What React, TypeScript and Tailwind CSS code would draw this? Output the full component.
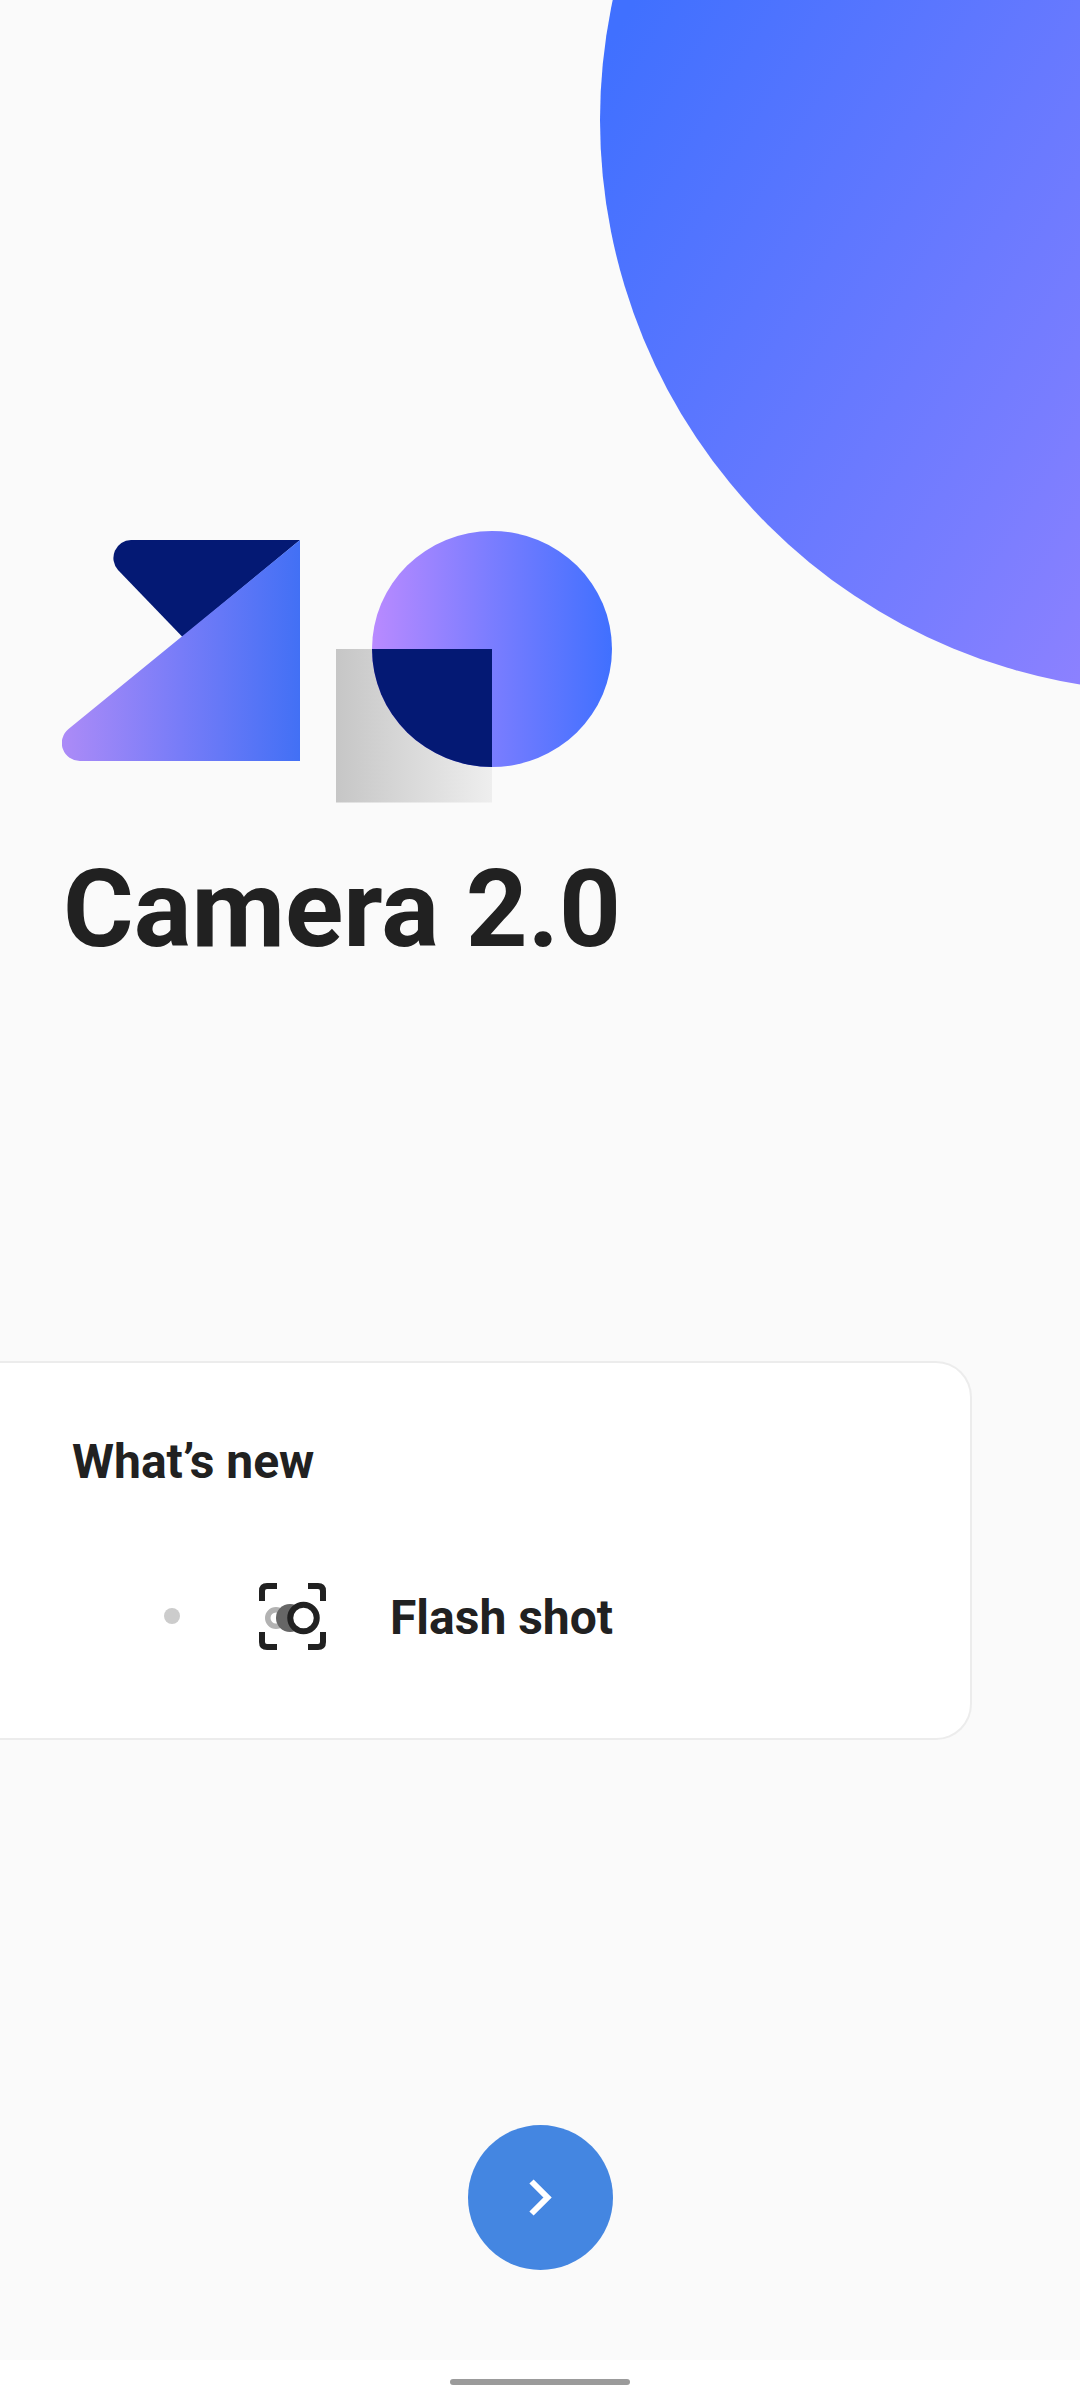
function HeroCircle() {
  return (
    <svg className="absolute top-0 right-0 h-[692px] w-[480px]" viewBox="600 0 480 692" aria-hidden="true">
      <defs>
        <linearGradient id="hero" gradientUnits="userSpaceOnUse" x1="605" y1="50" x2="1570" y2="620">
          <stop offset="0" stopColor="#4070ff" />
          <stop offset="0.5" stopColor="#787dff" />
          <stop offset="1" stopColor="#b98aff" />
        </linearGradient>
      </defs>
      <circle cx="1172" cy="120" r="572" fill="url(#hero)" />
    </svg>
  );
}

function Logo() {
  return (
    <svg className="h-[272px] w-[550px]" viewBox="62 531 550 272" role="img" aria-label="Camera logo">
      <defs>
        <linearGradient id="wedge" x1="0" y1="0" x2="1" y2="0">
          <stop offset="0" stopColor="#ac8bf7" />
          <stop offset="0.5" stopColor="#777cf8" />
          <stop offset="1" stopColor="#4270f5" />
        </linearGradient>
        <linearGradient id="disc" x1="0" y1="0" x2="1" y2="0">
          <stop offset="0" stopColor="#b98aff" />
          <stop offset="0.5" stopColor="#7a7dff" />
          <stop offset="1" stopColor="#4070ff" />
        </linearGradient>
        <linearGradient id="tile" x1="0" y1="0" x2="1" y2="0">
          <stop offset="0" stopColor="#c6c6c6" />
          <stop offset="1" stopColor="#eeeeee" />
        </linearGradient>
        <clipPath id="disc-clip">
          <ellipse cx="492" cy="649" rx="120" ry="118" />
        </clipPath>
      </defs>
      <path d="M300 540H131A18 18 0 0 0 118 570L182.500 637Z" fill="#041974" />
      <path d="M300 540V761H80A18 18 0 0 1 68.500 729Z" fill="url(#wedge)" />
      <rect x="336" y="649" width="156" height="153.500" fill="url(#tile)" />
      <ellipse cx="492" cy="649" rx="120" ry="118" fill="url(#disc)" />
      <rect x="336" y="649" width="156" height="153" fill="#041974" clipPath="url(#disc-clip)" />
    </svg>
  );
}

function FlashShotIcon() {
  return (
    <svg className="size-[67px]" viewBox="0 0 67 67" fill="none" aria-hidden="true">
      <circle cx="17" cy="35" r="8.250" stroke="#b2b2b2" strokeWidth="5.500" />
      <circle cx="31" cy="35" r="14" fill="#666666" />
      <circle cx="44.500" cy="35" r="13.250" fill="#ffffff" stroke="#212121" strokeWidth="6" />
      <path
        d="M3 18V8Q3 3 8 3H18M49 3H59Q64 3 64 8V18M64 49V59Q64 64 59 64H49M18 64H8Q3 64 3 59V49"
        stroke="#212121"
        strokeWidth="6"
      />
    </svg>
  );
}

export default function App() {
  return (
    <div className="relative flex min-h-screen flex-col overflow-hidden bg-[#fafafa] font-['Roboto',sans-serif] text-[#212121]">
      <HeroCircle />
      <main className="relative flex grow flex-col">
        <header className="px-[62px] pt-[531px]">
          <Logo />
          <h1 className="mt-[42px] pl-px text-[108px] leading-[128px] font-bold">Camera 2.0</h1>
        </header>

        <section
          aria-labelledby="whats-new"
          className="mt-[388px] mr-[108px] rounded-r-[36px] border-2 border-l-0 border-[#ececec] bg-white px-[72px] pt-[70px] pb-[88px]"
        >
          <h2 id="whats-new" className="text-[48px] leading-[58px] font-bold">
            What’s new
          </h2>
          <ul className="mt-[92px]">
            <li className="flex items-center pl-[92px]">
              <span className="mb-0.5 size-4 rounded-full bg-[#cccccc]" />
              <span className="ml-[79px]">
                <FlashShotIcon />
              </span>
              <span className="ml-16 pt-0.5 text-[48px] leading-[58px] font-bold">Flash shot</span>
            </li>
          </ul>
        </section>

        <div className="mt-auto flex justify-center pb-[90px]">
          <button
            type="button"
            aria-label="Next"
            className="flex size-[145px] items-center justify-center rounded-full bg-[#4486e1]"
          >
            <svg className="h-[37px] w-[23px]" viewBox="0 0 23 37" aria-hidden="true">
              <path d="M2.500 2.500L18.500 18.500L2.500 34.500" fill="none" stroke="#ffffff" strokeWidth="6" />
            </svg>
          </button>
        </div>
      </main>
      <footer className="relative flex h-10 items-center justify-center bg-white pt-1">
        <div className="h-[6px] w-[180px] rounded-full bg-[#9b9b9b]" />
      </footer>
    </div>
  );
}
